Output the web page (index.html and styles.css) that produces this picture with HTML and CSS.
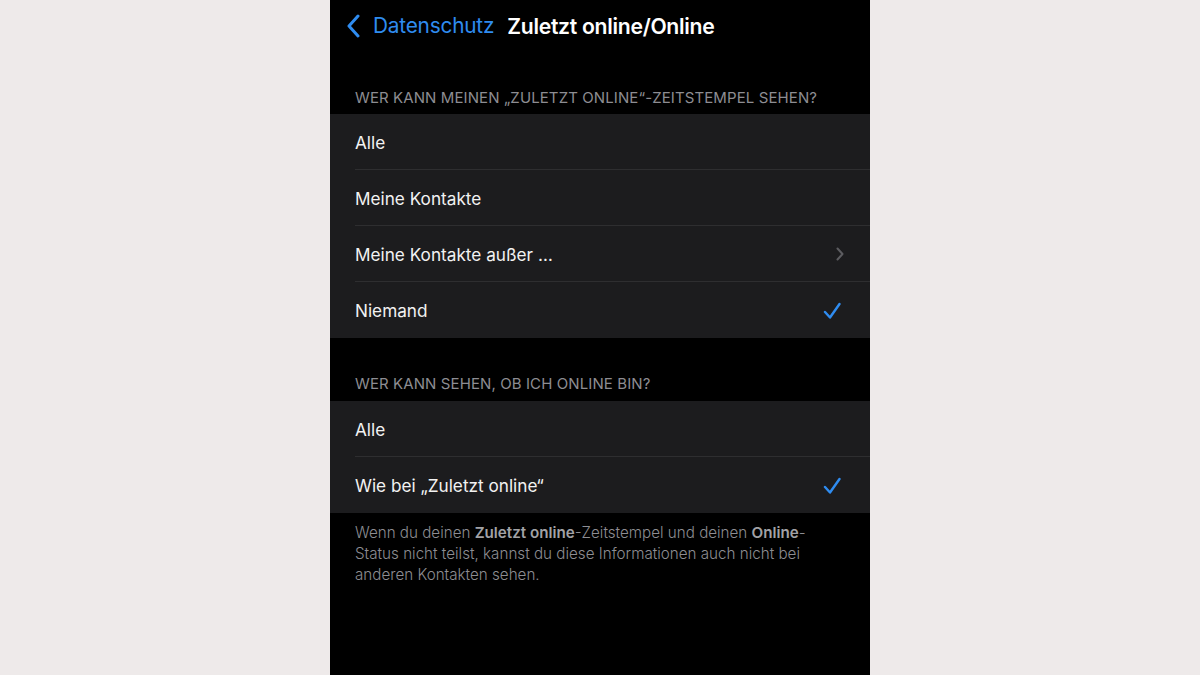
FILE: index.html
```html
<!DOCTYPE html>
<html lang="de">
<head>
  <meta charset="UTF-8">
  <meta name="viewport" content="width=device-width, initial-scale=1.0">
  <title>Zuletzt online/Online</title>
  <link rel="stylesheet" href="styles.css">
</head>
<body>
  <main class="phone">
    <header class="nav">
      <a class="back" href="#">
        <svg class="back-icon" viewBox="0 0 14 24" width="14" height="24">
          <path d="M12 2 L3 12 L12 22" fill="none" stroke="currentColor" stroke-width="3" stroke-linecap="round" stroke-linejoin="round"/>
        </svg>
        <span>Datenschutz</span>
      </a>
      <h1>Zuletzt online/Online</h1>
    </header>

    <h2 class="section-title">Wer kann meinen „Zuletzt online“-Zeitstempel sehen?</h2>
    <ul class="group">
      <li class="row"><div class="row-inner">Alle</div></li>
      <li class="row"><div class="row-inner">Meine Kontakte</div></li>
      <li class="row">
        <div class="row-inner">
          Meine Kontakte außer …
          <svg class="chevron" viewBox="0 0 8 14" width="8" height="14">
            <path d="M1.5 1.5 L6.5 7 L1.5 12.5" fill="none" stroke="currentColor" stroke-width="2" stroke-linecap="round" stroke-linejoin="round"/>
          </svg>
        </div>
      </li>
      <li class="row">
        <div class="row-inner">
          Niemand
          <svg class="check" viewBox="0 0 18 18" width="18" height="18">
            <path d="M2 10 L7 15.5 L16.5 2" fill="none" stroke="currentColor" stroke-width="2.4" stroke-linecap="round" stroke-linejoin="round"/>
          </svg>
        </div>
      </li>
    </ul>

    <h2 class="section-title second">Wer kann sehen, ob ich online bin?</h2>
    <ul class="group">
      <li class="row"><div class="row-inner">Alle</div></li>
      <li class="row">
        <div class="row-inner">
          Wie bei „Zuletzt online“
          <svg class="check" viewBox="0 0 18 18" width="18" height="18">
            <path d="M2 10 L7 15.5 L16.5 2" fill="none" stroke="currentColor" stroke-width="2.4" stroke-linecap="round" stroke-linejoin="round"/>
          </svg>
        </div>
      </li>
    </ul>

    <p class="footer-note">
      Wenn du deinen <strong>Zuletzt online</strong>-Zeitstempel und deinen <strong>Online</strong>-<br>Status nicht teilst, kannst du diese Informationen auch nicht bei<br>anderen Kontakten sehen.
    </p>
  </main>
</body>
</html>
```

FILE: styles.css
```css
:root {
  --fundo: #eeeaea;
  --preto: #000;
  --linha: #1c1c1e;
  --separador: #2e2e30;
  --azul: #2f8cf0;
  --cinza: #8d8d92;
  --texto: #f2f2f2;
}

* {
  box-sizing: border-box;
  margin: 0;
  padding: 0;
}

body {
  font-family: Inter, 'Noto Sans', sans-serif;
  background-color: var(--fundo);
  display: flex;
  justify-content: center;
  height: 675px;
  overflow: hidden;
}

.phone {
  width: 540px;
  height: 675px;
  background-color: var(--preto);
  color: var(--texto);
}

.nav {
  height: 51px;
  display: flex;
  align-items: center;
  padding-left: 16px;
}

.back {
  display: flex;
  align-items: center;
  color: var(--azul);
  text-decoration: none;
  font-size: 20.8px;
  letter-spacing: -0.2px;
}

.back-icon {
  margin-right: 13px;
}

.nav h1 {
  font-size: 21.2px;
  font-weight: 600;
  letter-spacing: -0.3px;
  margin-left: 13px;
  color: #fff;
}

.section-title {
  font-size: 15px;
  font-weight: 400;
  line-height: 18px;
  text-transform: uppercase;
  color: var(--cinza);
  padding: 38px 25px 7px;
  letter-spacing: 0.1px;
}

.section-title.second {
  padding-top: 37px;
  padding-bottom: 8px;
}

.group {
  list-style: none;
  background-color: var(--linha);
}

.row {
  padding-left: 25px;
}

.row-inner {
  height: 56px;
  display: flex;
  align-items: center;
  justify-content: space-between;
  padding-right: 26px;
  padding-top: 1px;
  font-size: 17.2px;
  border-bottom: 1px solid var(--separador);
}

.row:last-child .row-inner {
  border-bottom: none;
}

.chevron {
  color: #5c5c60;
}

.check {
  color: var(--azul);
  margin-right: 3px;
}

.footer-note {
  padding: 9px 25px;
  font-size: 15.2px;
  line-height: 21px;
  color: var(--cinza);
  font-weight: 300;
}

.footer-note strong {
  font-weight: 600;
  color: #a2a2a6;
}
```
